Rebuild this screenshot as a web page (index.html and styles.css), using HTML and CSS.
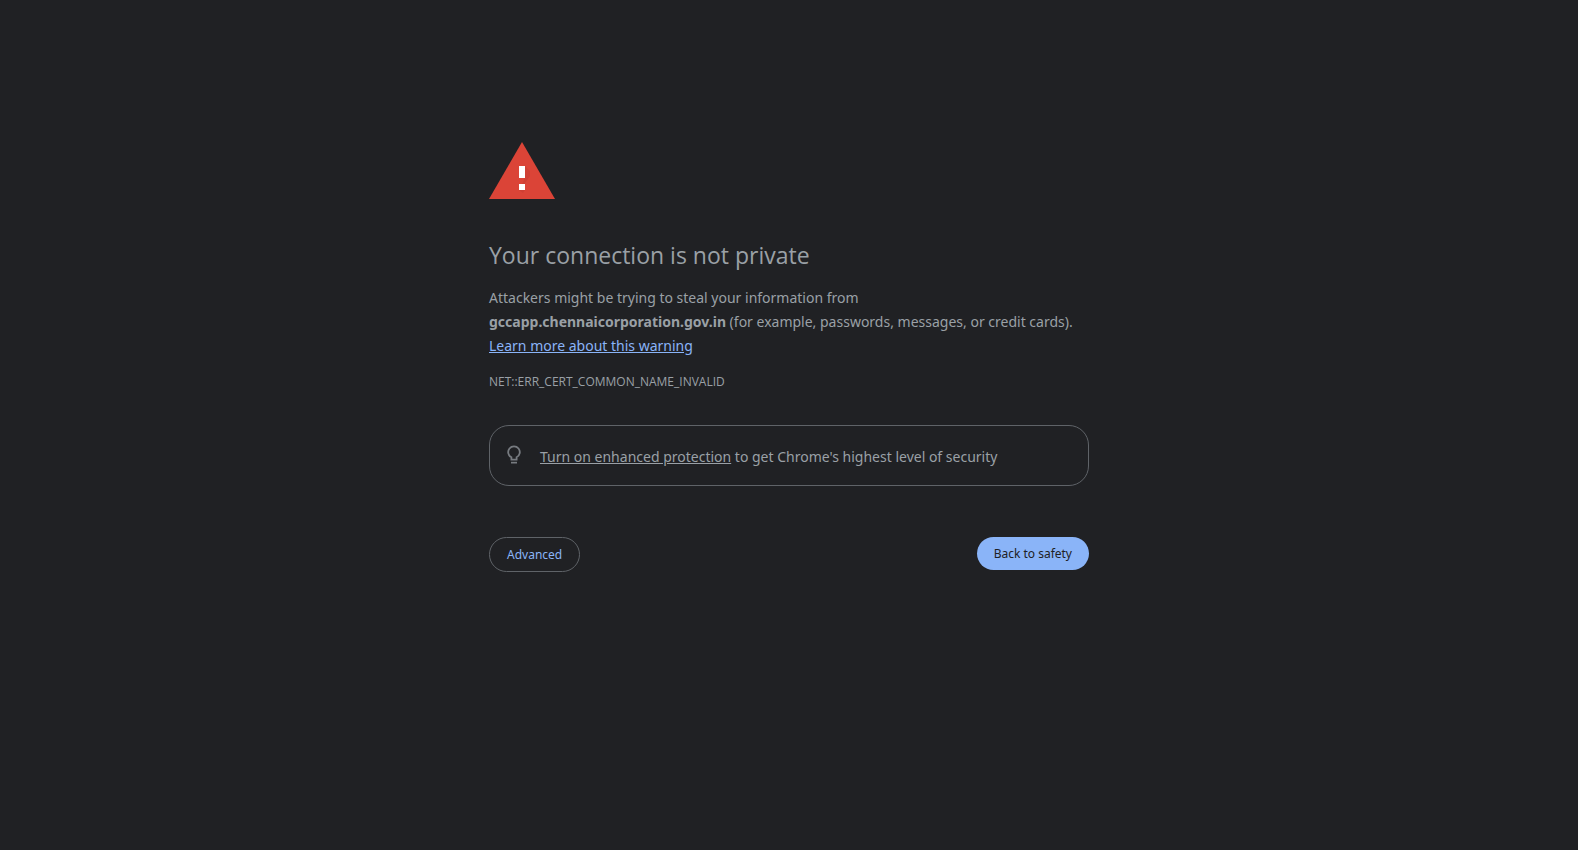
FILE: index.html
```
<!DOCTYPE html>
<html lang="en">
<head>
    <meta charset="UTF-8">
    <meta name="viewport" content="width=device-width, initial-scale=1.0">
    <title>Privacy error</title>
    <link rel="stylesheet" href="styles.css">
</head>
<body>
    <main class="interstitial">
        <svg class="warning-icon" viewBox="0 0 66 57" aria-hidden="true">
            <path fill="#db4437" d="M33 0 66 57H0Z"/>
            <path fill="#cf4034" d="M36 24l5 5v5l-5 7v7l-2 3-4-3 6-12z"/>
            <path fill="#fff" d="M30 24h6v12h-6zM30 42h6v6h-6z"/>
        </svg>

        <h1>Your connection is not private</h1>
        <p class="message">
            Attackers might be trying to steal your information from
            <strong>gccapp.chennaicorporation.gov.in</strong> (for example, passwords, messages, or credit cards).
            <a class="learn-more" href="#">Learn more about this warning</a>
        </p>
        <div class="error-code">NET::ERR_CERT_COMMON_NAME_INVALID</div>

        <div class="promo">
            <svg class="bulb-icon" viewBox="0 0 14 19" aria-hidden="true">
                <path fill="none" stroke="currentColor" stroke-width="1.8" d="M4.400 14.600v-2.300A5.800 5.800 0 1 1 9.600 12.300v2.300z"/>
                <path fill="currentColor" d="M4 16.800h6v1.700H4z"/>
            </svg>
            <p><a class="promo-link" href="#">Turn on enhanced protection</a> to get Chrome's highest level of security</p>
        </div>

        <div class="nav-wrapper">
            <button class="secondary-button" type="button">Advanced</button>
            <button class="primary-button" type="button">Back to safety</button>
        </div>
    </main>
</body>
</html>
```
FILE: styles.css
```
body {
    margin: 0;
    background: #202124;
    color: #9aa0a6;
    font-family: 'Segoe UI', 'Noto Sans', sans-serif;
    font-size: 14px;
    line-height: 24px;
}
.interstitial {
    max-width: 600px;
    margin: 0 auto;
    padding-top: 142px;
}
.warning-icon {
    display: block;
    width: 66px;
    height: 57px;
    margin-bottom: 41px;
}
h1 {
    margin: 0 0 16px;
    font-family: 'Segoe UI', 'Open Sans', sans-serif;
    font-size: 23px;
    font-weight: 400;
    line-height: 30px;
}
p {
    margin: 0;
}
.learn-more {
    display: block;
    width: fit-content;
    color: #8ab4f8;
}
.error-code {
    margin-top: 12px;
    font-family: 'Segoe UI', 'Open Sans', sans-serif;
    font-size: 12px;
}
.promo {
    display: flex;
    align-items: flex-start;
    gap: 19px;
    margin-top: 31px;
    padding: 19px 17px 16px;
    border: 1px solid #5f6368;
    border-radius: 20px;
}
.bulb-icon {
    width: 14px;
    height: 19px;
    color: #777b80;
}
.promo-link {
    color: inherit;
}
.nav-wrapper {
    display: flex;
    justify-content: space-between;
    align-items: flex-start;
    margin-top: 51px;
}
button {
    padding: 8px 17px;
    border: 0;
    border-radius: 20px;
    font-family: inherit;
    font-size: 12px;
    line-height: 17px;
    cursor: pointer;
}
.primary-button {
    background: #8ab4f8;
    color: #202124;
}
.secondary-button {
    border: 1px solid #5f6368;
    background: #202124;
    color: #8ab4f8;
}
```
